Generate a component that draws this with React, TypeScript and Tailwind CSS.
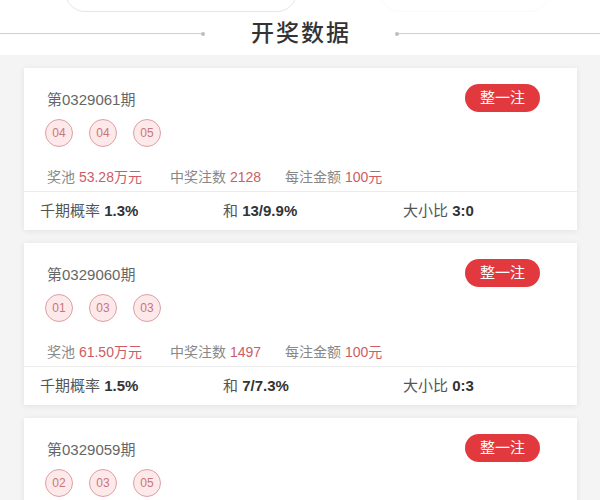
const DRAWS = [
  {
    period: "0329061",
    balls: ["04", "04", "05"],
    pool: "53.28万元",
    count: "2128",
    prize: "100元",
    rate: "1.3%",
    sum: "13/9.9%",
    ratio: "3:0",
  },
  {
    period: "0329060",
    balls: ["01", "03", "03"],
    pool: "61.50万元",
    count: "1497",
    prize: "100元",
    rate: "1.5%",
    sum: "7/7.3%",
    ratio: "0:3",
  },
  {
    period: "0329059",
    balls: ["02", "03", "05"],
    pool: "58.10万元",
    count: "1620",
    prize: "100元",
    rate: "1.4%",
    sum: "10/12.5%",
    ratio: "1:2",
  },
];

type Draw = (typeof DRAWS)[number];

function Ball({ n }: { n: string }) {
  return (
    <span className="flex h-[28px] w-[28px] items-center justify-center rounded-full border border-[#df9ea3] bg-[#fde9ea] text-[12px] text-[#c7767c]">
      {n}
    </span>
  );
}

function DrawCard({ d }: { d: Draw }) {
  return (
    <div className="bg-white shadow-[0_1px_6px_rgba(0,0,0,0.08)]">
      <div className="pl-[23px] pr-[37px] pt-[16px] pb-[4px]">
        <div className="flex h-[28px] items-center justify-between">
          <span className="mt-[4px] text-[15px] text-[#666]">第{d.period}期</span>
          <button
            type="button"
            className="flex h-[28px] w-[75px] items-center justify-center rounded-full bg-[#e2393f] text-[15px] text-white"
          >
            整一注
          </button>
        </div>
        <div className="mt-[7px] flex gap-[16px] -ml-[2px]">
          {d.balls.map((b, i) => (
            <Ball key={i} n={b} />
          ))}
        </div>
        <div className="mt-[20px] flex h-[20px] items-center text-[14px] text-[#888]">
          <span className="w-[123px]">
            奖池 <span className="text-[#cd5c66]">{d.pool}</span>
          </span>
          <span className="w-[115px]">
            中奖注数 <span className="text-[#cd5c66]">{d.count}</span>
          </span>
          <span>
            每注金额 <span className="text-[#cd5c66]">{d.prize}</span>
          </span>
        </div>
      </div>
      <div className="flex h-[39px] items-center border-t border-[#ececec] pl-[16px] text-[15px] text-[#555]">
        <span className="w-[183px]">
          千期概率 <b className="font-semibold text-[#333]">{d.rate}</b>
        </span>
        <span className="w-[180px]">
          和 <b className="font-semibold text-[#333]">{d.sum}</b>
        </span>
        <span>
          大小比 <b className="font-semibold text-[#333]">{d.ratio}</b>
        </span>
      </div>
    </div>
  );
}

export default function App() {
  return (
    <div
      className="h-[500px] w-[600px] overflow-hidden bg-[#f4f4f4]"
      style={{ fontFamily: '"Liberation Sans", "Noto Sans CJK SC", sans-serif' }}
    >
      <div className="bg-white">
        <div className="flex items-start gap-[83px] pl-[65px]">
          <div className="-mt-[28px] h-[40px] w-[232px] rounded-[20px] border border-[#e6e6e6]" />
          <div className="-mt-[28px] h-[40px] w-[170px] rounded-[20px] border border-[#fafafa]" />
        </div>
        <div className="flex h-[43px] items-center">
          <div className="flex flex-1 items-center">
            <div className="h-px flex-1 bg-[#cfcfcf]" />
            <div className="h-[4px] w-[4px] rounded-full bg-[#bdbdbd]" />
          </div>
          <h2 className="w-[190px] pl-[2px] text-center text-[23px] font-medium leading-none tracking-[2px] text-[#333]">
            开奖数据
          </h2>
          <div className="flex flex-1 items-center">
            <div className="h-[4px] w-[4px] rounded-full bg-[#bdbdbd]" />
            <div className="h-px flex-1 bg-[#cfcfcf]" />
          </div>
        </div>
      </div>
      <div className="flex flex-col gap-[13px] pl-[24px] pr-[23px] pt-[13px]">
        {DRAWS.map((d) => (
          <DrawCard key={d.period} d={d} />
        ))}
      </div>
    </div>
  );
}
